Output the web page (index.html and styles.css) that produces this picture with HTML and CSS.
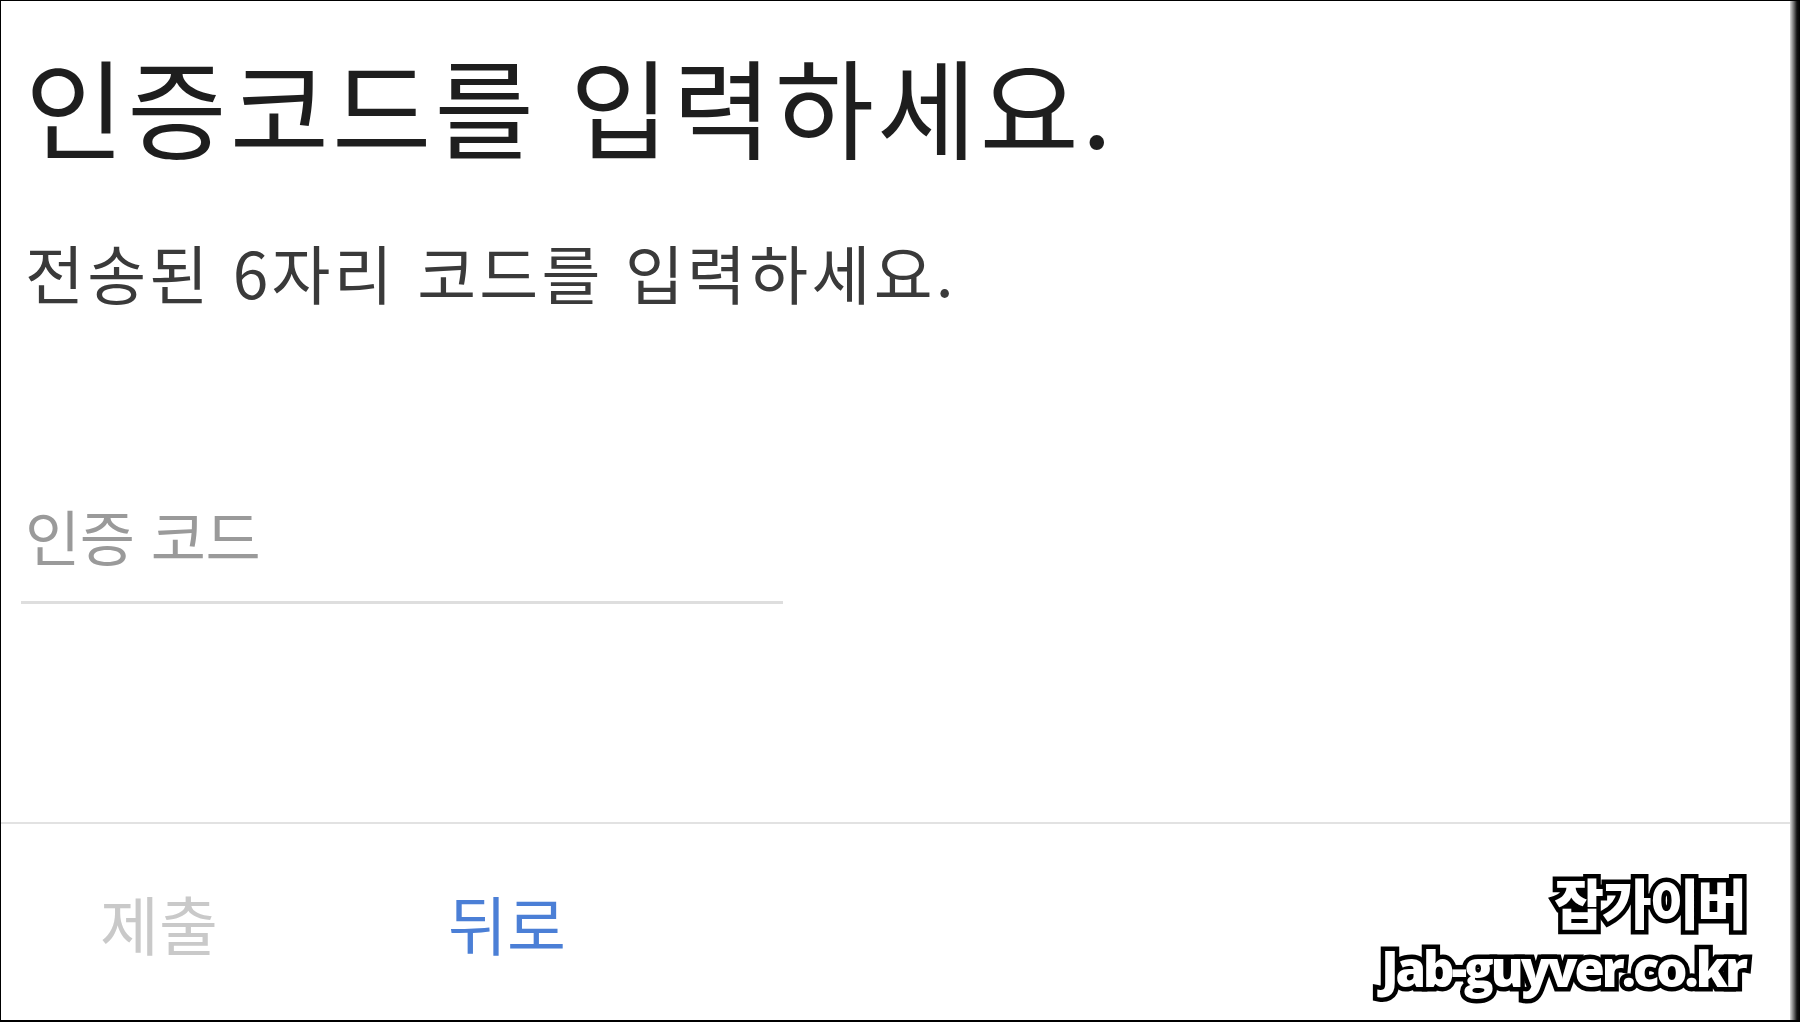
FILE: index.html
```html
<!DOCTYPE html>
<html lang="ko">
<head>
<meta charset="utf-8">
<link rel="stylesheet" href="styles.css">
</head>
<body>
<div class="frame">
  <div class="main">
    <div class="content">
      <h1 class="title">인증코드를 입력하세요.</h1>
      <p class="subtitle">전송된 6자리 코드를 입력하세요.</p>
      <div class="field"><span class="placeholder">인증 코드</span></div>
    </div>
    <div class="footer">
      <button class="btn btn-disabled">제출</button>
      <button class="btn btn-link">뒤로</button>
    </div>
  </div>
  <div class="stripe"></div>
  <div class="watermark">
    <div class="wm-ko">잡가이버</div>
    <div class="wm-en">Jab-guyver.co.kr</div>
  </div>
</div>
</body>
</html>
```
FILE: styles.css
```css
html, body {
  margin: 0;
  padding: 0;
  background: #fff;
}
.frame {
  position: relative;
  width: 1800px;
  height: 1022px;
  box-sizing: border-box;
  border-left: 1px solid #000;
  border-top: 1px solid #000;
  border-bottom: 2px solid #000;
  display: flex;
  font-family: "Noto Sans CJK KR", "Noto Sans", sans-serif;
  overflow: hidden;
}
.main {
  flex: 1;
  display: flex;
  flex-direction: column;
}
.content {
  flex: 1;
  padding-left: 24px;
  border-bottom: 2px solid #e2e2e2;
}
.title {
  margin: 39px 0 0;
  font-size: 108px;
  font-weight: 400;
  line-height: 1.2;
  letter-spacing: 3px;
  color: #1e1e1e;
}
.subtitle {
  margin: 63px 0 0;
  font-size: 64px;
  line-height: 1.2;
  letter-spacing: 3.3px;
  color: #3a3a3a;
}
.field {
  width: 762px;
  margin: 190px 0 0 -4px;
  padding-left: 4px;
  height: 105px;
  border-bottom: 3px solid #dedede;
  box-sizing: border-box;
}
.placeholder {
  font-size: 60px;
  line-height: 1.2;
  letter-spacing: -0.5px;
  color: #9a9a9a;
}
.footer {
  height: 196px;
  display: flex;
  align-items: center;
  padding-left: 8px;
  gap: 48px;
}
.btn {
  width: 300px;
  background: none;
  border: none;
  padding: 0;
  font-family: inherit;
  font-size: 64px;
  line-height: 1.2;
  text-align: center;
}
.btn-disabled {
  color: #c9c9c9;
}
.btn-link {
  color: #4b7fd6;
}
.stripe {
  width: 10px;
  background: linear-gradient(to right, #d8d8d8, #6a6a6a 40%, #111 70%, #000);
}
.watermark {
  position: absolute;
  right: 55px;
  bottom: 24px;
  text-align: right;
  color: #fff;
  font-weight: 900;
  paint-order: stroke fill;
  -webkit-text-stroke: 9px #000;
}
.wm-ko {
  font-size: 54px;
  line-height: 1.15;
  letter-spacing: -2px;
  margin-bottom: 7px;
}
.wm-en {
  font-family: "Open Sans", "Noto Sans", sans-serif;
  font-weight: 800;
  font-size: 49px;
  line-height: 1.15;
  letter-spacing: -3px;
}
```
